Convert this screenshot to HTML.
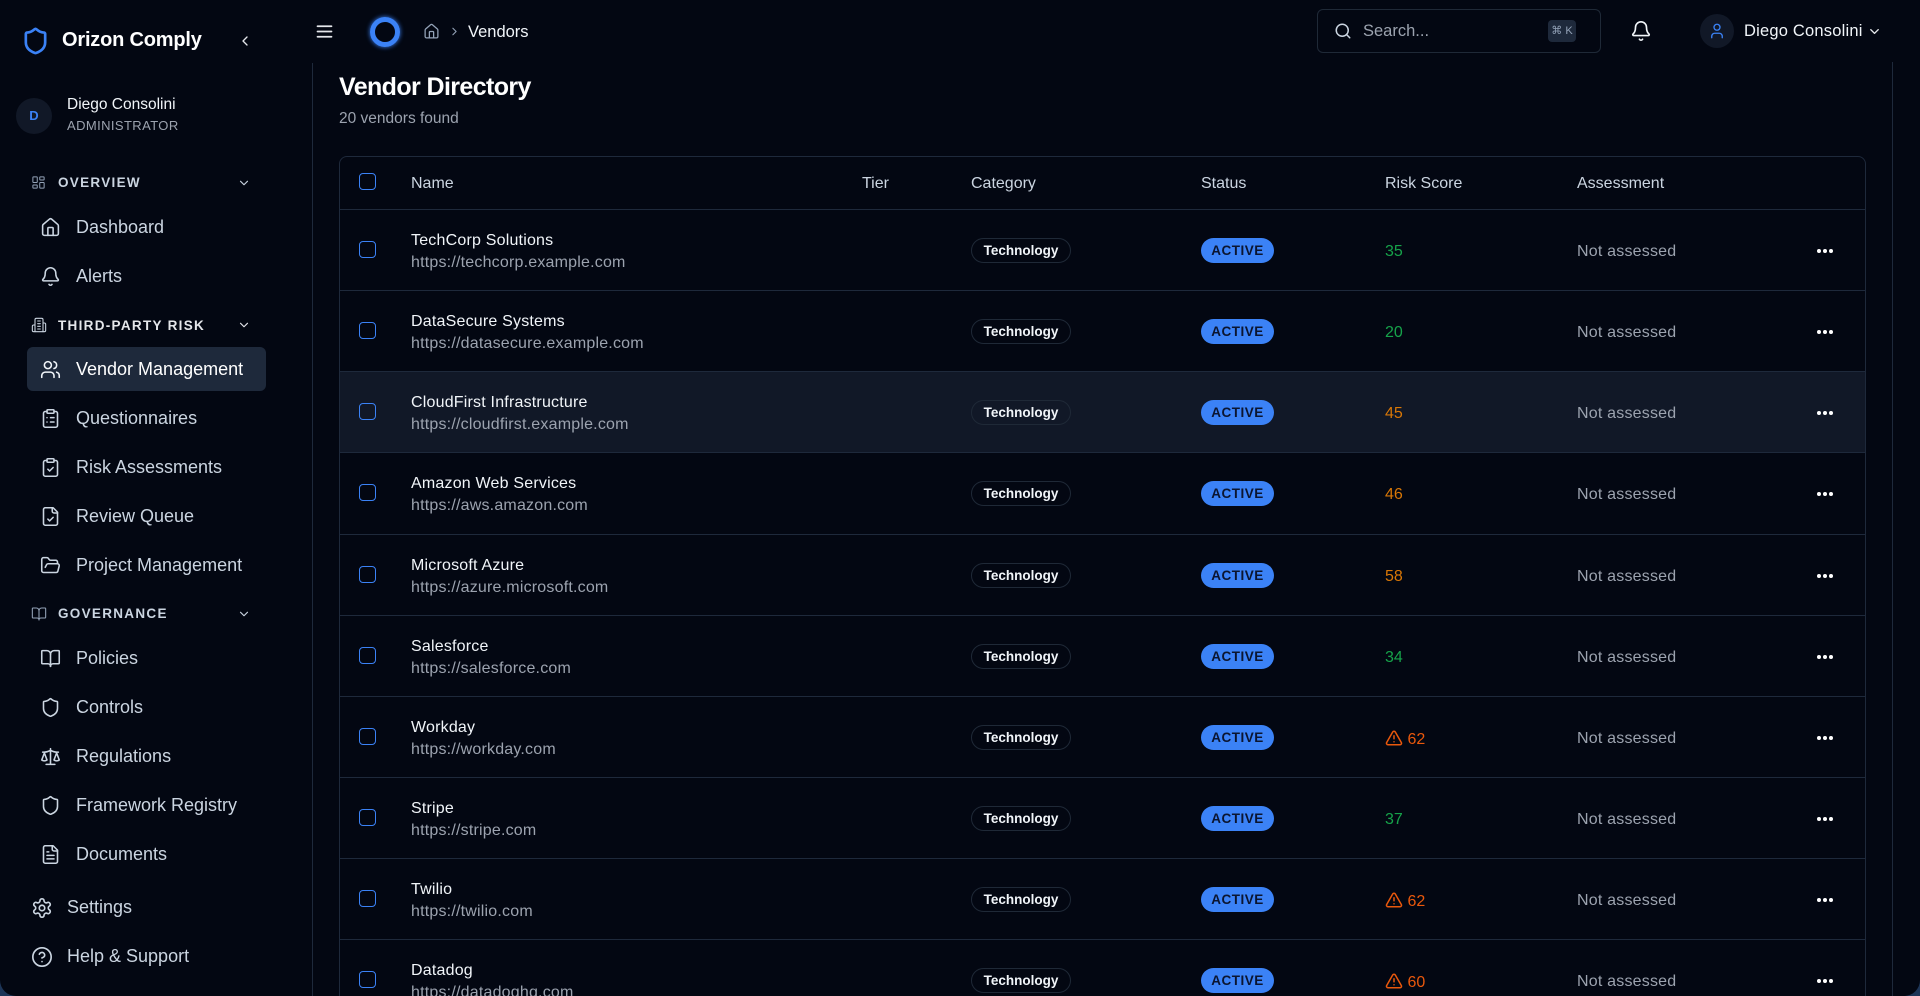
<!DOCTYPE html>
<html><head><meta charset="utf-8"><style>
*{margin:0;padding:0;box-sizing:border-box}
html,body{width:1920px;height:996px;overflow:hidden;background:#1d3557}
body{font-family:"Liberation Sans",sans-serif;color:#e5e7eb}
#app{position:absolute;left:0;top:0;width:1920px;height:996px;background:#030712;border-radius:0 0 16px 16px;overflow:hidden}
.a{position:absolute;white-space:nowrap}
svg.i{position:absolute;fill:none;stroke:currentColor;stroke-width:2;stroke-linecap:round;stroke-linejoin:round}
.nav{color:#cbd5e1;font-size:18px;margin-top:1px}
.sec{color:#cbd5e1;font-size:13.5px;font-weight:bold;letter-spacing:1.3px;margin-top:1px}
.row{position:absolute;left:340px;width:1525px;height:81px;border-top:1px solid #1e293b}
.cb{position:absolute;left:19px;width:17px;height:17px;border:1.6px solid #3b82f6;border-radius:4px}
.nm{position:absolute;left:71px;font-size:16px;letter-spacing:.2px;color:#f1f5f9}
.url{position:absolute;left:71px;font-size:16px;letter-spacing:.2px;color:#9ca3af}
.tech{position:absolute;left:631px;width:100px;height:25px;border:1.5px solid #1f2937;border-radius:13px;font-size:13.5px;font-weight:bold;color:#f1f5f9;text-align:center;line-height:23px}
.act{position:absolute;left:861px;width:73px;height:25px;background:#3b82f6;border-radius:13px;font-size:13.5px;font-weight:bold;color:#0b1530;text-align:center;line-height:26px;letter-spacing:.5px}
.rs{position:absolute;left:1045px;font-size:16px}
.asm{position:absolute;left:1237px;font-size:16px;letter-spacing:.2px;color:#9ca3af}
.dots{position:absolute;left:1477px;width:16px;height:4px}
.dots:before{content:"";position:absolute;left:0;top:0;width:4px;height:4px;border-radius:50%;background:#fff;box-shadow:6px 0 #fff,12px 0 #fff}
</style></head><body><div id="app">

<!-- Sidebar -->
<div class="a" style="left:312px;top:63px;width:1px;height:933px;background:#1e293b"></div>
<svg class="i" style="left:21px;top:25px;color:#3b82f6;stroke-width:2.2" width="29" height="32" viewBox="0 0 24 24"><path d="M20 13c0 5-3.5 7.5-7.66 8.95a1 1 0 0 1-.67-.01C7.5 20.5 4 18 4 13V6a1 1 0 0 1 1-1c2 0 4.5-1.2 6.24-2.72a1.17 1.17 0 0 1 1.52 0C14.51 3.81 17 5 19 5a1 1 0 0 1 1 1z"/></svg>
<div class="a" style="left:62px;top:29px;font-size:20px;font-weight:bold;color:#fff;letter-spacing:-.2px">Orizon Comply</div>
<svg class="i" style="left:237px;top:33px;color:#e5e7eb" width="16" height="16" viewBox="0 0 24 24"><path d="m15 18-6-6 6-6"/></svg>

<div class="a" style="left:16px;top:98px;width:36px;height:36px;border-radius:50%;background:#111827;color:#3b82f6;font-size:13px;font-weight:bold;text-align:center;line-height:36px">D</div>
<div class="a" style="left:67px;top:96px;font-size:15.5px;color:#f1f5f9">Diego Consolini</div>
<div class="a" style="left:67px;top:118px;font-size:13px;color:#9ca3af;letter-spacing:.4px">ADMINISTRATOR</div>

<svg class="i" style="left:31px;top:175px;color:#94a3b8;stroke-width:1.6" width="15" height="15" viewBox="0 0 24 24"><rect x="3" y="3" width="7" height="9" rx="1"/><rect x="14" y="3" width="7" height="5" rx="1"/><rect x="14" y="12" width="7" height="9" rx="1"/><rect x="3" y="16" width="7" height="5" rx="1"/></svg>
<div class="a sec" style="left:58px;top:174px">OVERVIEW</div>
<svg class="i" style="left:237px;top:176px;color:#cbd5e1" width="14" height="14" viewBox="0 0 24 24"><path d="m6 9 6 6 6-6"/></svg>

<svg class="i" style="left:40px;top:217px;color:#cbd5e1;stroke-width:1.8" width="21" height="21" viewBox="0 0 24 24"><path d="M15 21v-8a1 1 0 0 0-1-1h-4a1 1 0 0 0-1 1v8"/><path d="M3 10a2 2 0 0 1 .709-1.528l7-5.999a2 2 0 0 1 2.582 0l7 5.999A2 2 0 0 1 21 10v9a2 2 0 0 1-2 2H5a2 2 0 0 1-2-2z"/></svg>
<div class="a nav" style="left:76px;top:216px">Dashboard</div>
<svg class="i" style="left:40px;top:266px;color:#cbd5e1;stroke-width:1.8" width="21" height="21" viewBox="0 0 24 24"><path d="M10.268 21a2 2 0 0 0 3.464 0"/><path d="M3.262 15.326A1 1 0 0 0 4 17h16a1 1 0 0 0 .74-1.673C19.41 13.956 18 12.499 18 8A6 6 0 0 0 6 8c0 4.499-1.411 5.956-2.738 7.326"/></svg>
<div class="a nav" style="left:76px;top:265px">Alerts</div>

<svg class="i" style="left:31px;top:317px;color:#cbd5e1;stroke-width:1.6" width="16" height="16" viewBox="0 0 24 24"><path d="M6 22V4a2 2 0 0 1 2-2h8a2 2 0 0 1 2 2v18Z"/><path d="M6 12H4a2 2 0 0 0-2 2v6a2 2 0 0 0 2 2h2"/><path d="M18 9h2a2 2 0 0 1 2 2v9a2 2 0 0 1-2 2h-2"/><path d="M10 6h4M10 10h4M10 14h4M10 18h4"/></svg>
<div class="a sec" style="left:58px;top:317px;color:#e5e7eb">THIRD-PARTY RISK</div>
<svg class="i" style="left:237px;top:318px;color:#e5e7eb" width="14" height="14" viewBox="0 0 24 24"><path d="m6 9 6 6 6-6"/></svg>

<div class="a" style="left:27px;top:347px;width:239px;height:44px;background:#1e293b;border-radius:6px"></div>
<svg class="i" style="left:40px;top:359px;color:#f1f5f9;stroke-width:1.8" width="21" height="21" viewBox="0 0 24 24"><path d="M16 21v-2a4 4 0 0 0-4-4H6a4 4 0 0 0-4 4v2"/><circle cx="9" cy="7" r="4"/><path d="M22 21v-2a4 4 0 0 0-3-3.87M16 3.13a4 4 0 0 1 0 7.75"/></svg>
<div class="a nav" style="left:76px;top:358px;color:#fff">Vendor Management</div>

<svg class="i" style="left:40px;top:408px;color:#cbd5e1;stroke-width:1.8" width="21" height="21" viewBox="0 0 24 24"><rect x="8" y="2" width="8" height="4" rx="1"/><path d="M16 4h2a2 2 0 0 1 2 2v14a2 2 0 0 1-2 2H6a2 2 0 0 1-2-2V6a2 2 0 0 1 2-2h2"/><path d="M12 11h4M12 16h4M8 11h.01M8 16h.01"/></svg>
<div class="a nav" style="left:76px;top:407px">Questionnaires</div>
<svg class="i" style="left:40px;top:457px;color:#cbd5e1;stroke-width:1.8" width="21" height="21" viewBox="0 0 24 24"><rect x="8" y="2" width="8" height="4" rx="1"/><path d="M16 4h2a2 2 0 0 1 2 2v14a2 2 0 0 1-2 2H6a2 2 0 0 1-2-2V6a2 2 0 0 1 2-2h2"/><path d="m9 14 2 2 4-4"/></svg>
<div class="a nav" style="left:76px;top:456px">Risk Assessments</div>
<svg class="i" style="left:40px;top:506px;color:#cbd5e1;stroke-width:1.8" width="21" height="21" viewBox="0 0 24 24"><path d="M15 2H6a2 2 0 0 0-2 2v16a2 2 0 0 0 2 2h12a2 2 0 0 0 2-2V7Z"/><path d="M14 2v4a2 2 0 0 0 2 2h4"/><path d="m9 15 2 2 4-4"/></svg>
<div class="a nav" style="left:76px;top:505px">Review Queue</div>
<svg class="i" style="left:40px;top:555px;color:#cbd5e1;stroke-width:1.8" width="21" height="21" viewBox="0 0 24 24"><path d="m6 14 1.5-2.9A2 2 0 0 1 9.24 10H20a2 2 0 0 1 1.94 2.5l-1.54 6a2 2 0 0 1-1.95 1.5H4a2 2 0 0 1-2-2V5a2 2 0 0 1 2-2h3.9a2 2 0 0 1 1.69.9l.81 1.2a2 2 0 0 0 1.67.9H18a2 2 0 0 1 2 2v2"/></svg>
<div class="a nav" style="left:76px;top:554px">Project Management</div>

<svg class="i" style="left:31px;top:606px;color:#94a3b8;stroke-width:1.6" width="16" height="16" viewBox="0 0 24 24"><path d="M12 7v14"/><path d="M3 18a1 1 0 0 1-1-1V4a1 1 0 0 1 1-1h5a4 4 0 0 1 4 4 4 4 0 0 1 4-4h5a1 1 0 0 1 1 1v13a1 1 0 0 1-1 1h-6a3 3 0 0 0-3 3 3 3 0 0 0-3-3z"/></svg>
<div class="a sec" style="left:58px;top:605px">GOVERNANCE</div>
<svg class="i" style="left:237px;top:607px;color:#cbd5e1" width="14" height="14" viewBox="0 0 24 24"><path d="m6 9 6 6 6-6"/></svg>

<svg class="i" style="left:40px;top:648px;color:#cbd5e1;stroke-width:1.8" width="21" height="21" viewBox="0 0 24 24"><path d="M12 7v14"/><path d="M3 18a1 1 0 0 1-1-1V4a1 1 0 0 1 1-1h5a4 4 0 0 1 4 4 4 4 0 0 1 4-4h5a1 1 0 0 1 1 1v13a1 1 0 0 1-1 1h-6a3 3 0 0 0-3 3 3 3 0 0 0-3-3z"/></svg>
<div class="a nav" style="left:76px;top:647px">Policies</div>
<svg class="i" style="left:40px;top:697px;color:#cbd5e1;stroke-width:1.8" width="21" height="21" viewBox="0 0 24 24"><path d="M20 13c0 5-3.5 7.5-7.66 8.95a1 1 0 0 1-.67-.01C7.5 20.5 4 18 4 13V6a1 1 0 0 1 1-1c2 0 4.5-1.2 6.24-2.72a1.17 1.17 0 0 1 1.52 0C14.51 3.81 17 5 19 5a1 1 0 0 1 1 1z"/></svg>
<div class="a nav" style="left:76px;top:696px">Controls</div>
<svg class="i" style="left:40px;top:746px;color:#cbd5e1;stroke-width:1.8" width="21" height="21" viewBox="0 0 24 24"><path d="m16 16 3-8 3 8c-.87.65-1.920 1-3 1s-2.13-.35-3-1Z"/><path d="m2 16 3-8 3 8c-.87.65-1.92 1-3 1s-2.13-.35-3-1Z"/><path d="M7 21h10M12 3v18M3 7h2c2 0 5-1 7-2 2 1 5 2 7 2h2"/></svg>
<div class="a nav" style="left:76px;top:745px">Regulations</div>
<svg class="i" style="left:40px;top:795px;color:#cbd5e1;stroke-width:1.8" width="21" height="21" viewBox="0 0 24 24"><path d="M20 13c0 5-3.5 7.5-7.66 8.95a1 1 0 0 1-.67-.01C7.5 20.5 4 18 4 13V6a1 1 0 0 1 1-1c2 0 4.5-1.2 6.24-2.72a1.17 1.17 0 0 1 1.52 0C14.51 3.81 17 5 19 5a1 1 0 0 1 1 1z"/></svg>
<div class="a nav" style="left:76px;top:794px">Framework Registry</div>
<svg class="i" style="left:40px;top:844px;color:#cbd5e1;stroke-width:1.8" width="21" height="21" viewBox="0 0 24 24"><path d="M15 2H6a2 2 0 0 0-2 2v16a2 2 0 0 0 2 2h12a2 2 0 0 0 2-2V7Z"/><path d="M14 2v4a2 2 0 0 0 2 2h4"/><path d="M10 9H8M16 13H8M16 17H8"/></svg>
<div class="a nav" style="left:76px;top:843px">Documents</div>

<svg class="i" style="left:31px;top:897px;color:#cbd5e1;stroke-width:1.8" width="22" height="22" viewBox="0 0 24 24"><path d="M12.22 2h-.44a2 2 0 0 0-2 2v.18a2 2 0 0 1-1 1.73l-.43.25a2 2 0 0 1-2 0l-.15-.08a2 2 0 0 0-2.730.73l-.22.38a2 2 0 0 0 .73 2.73l.15.1a2 2 0 0 1 1 1.72v.51a2 2 0 0 1-1 1.74l-.15.09a2 2 0 0 0-.73 2.73l.22.38a2 2 0 0 0 2.73.73l.15-.08a2 2 0 0 1 2 0l.43.25a2 2 0 0 1 1 1.73V20a2 2 0 0 0 2 2h.44a2 2 0 0 0 2-2v-.18a2 2 0 0 1 1-1.73l.43-.25a2 2 0 0 1 2 0l.15.08a2 2 0 0 0 2.73-.73l.22-.39a2 2 0 0 0-.73-2.73l-.15-.08a2 2 0 0 1-1-1.74v-.5a2 2 0 0 1 1-1.74l.15-.09a2 2 0 0 0 .73-2.730l-.22-.38a2 2 0 0 0-2.73-.73l-.15.08a2 2 0 0 1-2 0l-.43-.25a2 2 0 0 1-1-1.73V4a2 2 0 0 0-2-2z"/><circle cx="12" cy="12" r="3"/></svg>
<div class="a nav" style="left:67px;top:896px">Settings</div>
<svg class="i" style="left:31px;top:946px;color:#cbd5e1;stroke-width:1.8" width="22" height="22" viewBox="0 0 24 24"><circle cx="12" cy="12" r="10"/><path d="M9.09 9a3 3 0 0 1 5.83 1c0 2-3 3-3 3M12 17h.01"/></svg>
<div class="a nav" style="left:67px;top:945px">Help &amp; Support</div>

<!-- Topbar -->
<svg class="i" style="left:314px;top:21px;color:#e5e7eb" width="21" height="21" viewBox="0 0 24 24"><path d="M4 6h16M4 12h16M4 18h16"/></svg>
<div class="a" style="left:370px;top:17px;width:30px;height:30px;border-radius:50%;border:5px solid #3b82f6;box-shadow:0 0 5px #3b82f6"></div>
<svg class="i" style="left:423px;top:23px;color:#94a3b8;stroke-width:1.8" width="17" height="17" viewBox="0 0 24 24"><path d="M15 21v-8a1 1 0 0 0-1-1h-4a1 1 0 0 0-1 1v8"/><path d="M3 10a2 2 0 0 1 .709-1.528l7-5.999a2 2 0 0 1 2.582 0l7 5.999A2 2 0 0 1 21 10v9a2 2 0 0 1-2 2H5a2 2 0 0 1-2-2z"/></svg>
<svg class="i" style="left:448px;top:25px;color:#94a3b8" width="13" height="13" viewBox="0 0 24 24"><path d="m9 18 6-6-6-6"/></svg>
<div class="a" style="left:468px;top:23px;font-size:16.5px;color:#f1f5f9">Vendors</div>

<div class="a" style="left:1317px;top:9px;width:284px;height:44px;border:1.5px solid #1f2937;border-radius:6px"></div>
<svg class="i" style="left:1334px;top:22px;color:#cbd5e1" width="18" height="18" viewBox="0 0 24 24"><circle cx="11" cy="11" r="8"/><path d="m21 21-4.3-4.3"/></svg>
<div class="a" style="left:1363px;top:22px;font-size:16.5px;color:#9ca3af">Search...</div>
<div class="a" style="left:1548px;top:20px;width:28px;height:22px;background:#1e293b;border-radius:4px;font-size:11px;color:#94a3b8;text-align:center;line-height:22px">⌘ K</div>
<svg class="i" style="left:1630px;top:20px;color:#f1f5f9;stroke-width:1.8" width="22" height="22" viewBox="0 0 24 24"><path d="M10.268 21a2 2 0 0 0 3.464 0"/><path d="M3.262 15.326A1 1 0 0 0 4 17h16a1 1 0 0 0 .74-1.673C19.41 13.956 18 12.499 18 8A6 6 0 0 0 6 8c0 4.499-1.411 5.956-2.738 7.326"/></svg>
<div class="a" style="left:1700px;top:14px;width:34px;height:34px;border-radius:50%;background:#111827"></div>
<svg class="i" style="left:1708px;top:22px;color:#3b82f6;stroke-width:1.8" width="18" height="18" viewBox="0 0 24 24"><path d="M19 21v-2a4 4 0 0 0-4-4H9a4 4 0 0 0-4 4v2"/><circle cx="12" cy="7" r="4"/></svg>
<div class="a" style="left:1744px;top:22px;font-size:16.5px;color:#f1f5f9;letter-spacing:.2px">Diego Consolini</div>
<svg class="i" style="left:1867px;top:24px;color:#e5e7eb" width="15" height="15" viewBox="0 0 24 24"><path d="m6 9 6 6 6-6"/></svg>

<div class="a" style="left:1892px;top:62px;width:1px;height:934px;background:#1e293b"></div>

<div class="a" style="left:339px;top:73px;font-size:25px;font-weight:bold;color:#fff;letter-spacing:-.6px">Vendor Directory</div>
<div class="a" style="left:339px;top:110px;font-size:15.5px;color:#9ca3af">20 vendors found</div>

<div class="a" style="left:339px;top:156px;width:1527px;height:860px;border:1.5px solid #1e293b;border-radius:8px"></div>
<div class="row" style="top:156px;height:53px;border-top:none">
  <div class="cb" style="top:17px"></div>
  <div class="a" style="left:71px;top:19px;font-size:16px;color:#cbd5e1">Name</div>
  <div class="a" style="left:522px;top:19px;font-size:16px;color:#cbd5e1">Tier</div>
  <div class="a" style="left:631px;top:19px;font-size:16px;color:#cbd5e1">Category</div>
  <div class="a" style="left:861px;top:19px;font-size:16px;color:#cbd5e1">Status</div>
  <div class="a" style="left:1045px;top:19px;font-size:16px;color:#cbd5e1">Risk Score</div>
  <div class="a" style="left:1237px;top:19px;font-size:16px;color:#cbd5e1">Assessment</div>
</div>

<div class="row" style="top:209px"><div class="cb" style="top:31px"></div><div class="nm" style="top:22px">TechCorp Solutions</div><div class="url" style="top:44px">https://techcorp.example.com</div><div class="tech" style="top:28px">Technology</div><div class="act" style="top:28px">ACTIVE</div><div class="rs" style="top:33px;color:#16a34a">35</div><div class="asm" style="top:33px">Not assessed</div><div class="dots" style="top:39px"></div></div>
<div class="row" style="top:290px"><div class="cb" style="top:31px"></div><div class="nm" style="top:22px">DataSecure Systems</div><div class="url" style="top:44px">https://datasecure.example.com</div><div class="tech" style="top:28px">Technology</div><div class="act" style="top:28px">ACTIVE</div><div class="rs" style="top:33px;color:#16a34a">20</div><div class="asm" style="top:33px">Not assessed</div><div class="dots" style="top:39px"></div></div>
<div class="row" style="top:371px;background:#111827"><div class="cb" style="top:31px"></div><div class="nm" style="top:22px">CloudFirst Infrastructure</div><div class="url" style="top:44px">https://cloudfirst.example.com</div><div class="tech" style="top:28px">Technology</div><div class="act" style="top:28px">ACTIVE</div><div class="rs" style="top:33px;color:#d97706">45</div><div class="asm" style="top:33px">Not assessed</div><div class="dots" style="top:39px"></div></div>
<div class="row" style="top:452px"><div class="cb" style="top:31px"></div><div class="nm" style="top:22px">Amazon Web Services</div><div class="url" style="top:44px">https://aws.amazon.com</div><div class="tech" style="top:28px">Technology</div><div class="act" style="top:28px">ACTIVE</div><div class="rs" style="top:33px;color:#d97706">46</div><div class="asm" style="top:33px">Not assessed</div><div class="dots" style="top:39px"></div></div>
<div class="row" style="top:534px"><div class="cb" style="top:31px"></div><div class="nm" style="top:22px">Microsoft Azure</div><div class="url" style="top:44px">https://azure.microsoft.com</div><div class="tech" style="top:28px">Technology</div><div class="act" style="top:28px">ACTIVE</div><div class="rs" style="top:33px;color:#d97706">58</div><div class="asm" style="top:33px">Not assessed</div><div class="dots" style="top:39px"></div></div>
<div class="row" style="top:615px"><div class="cb" style="top:31px"></div><div class="nm" style="top:22px">Salesforce</div><div class="url" style="top:44px">https://salesforce.com</div><div class="tech" style="top:28px">Technology</div><div class="act" style="top:28px">ACTIVE</div><div class="rs" style="top:33px;color:#16a34a">34</div><div class="asm" style="top:33px">Not assessed</div><div class="dots" style="top:39px"></div></div>
<div class="row" style="top:696px"><div class="cb" style="top:31px"></div><div class="nm" style="top:22px">Workday</div><div class="url" style="top:44px">https://workday.com</div><div class="tech" style="top:28px">Technology</div><div class="act" style="top:28px">ACTIVE</div><div class="rs" style="top:32px;color:#ea580c"><svg style="vertical-align:-3px;fill:none;stroke:#ea580c;stroke-width:2;stroke-linecap:round;stroke-linejoin:round" width="18" height="18" viewBox="0 0 24 24"><path d="m21.73 18-8-14a2 2 0 0 0-3.48 0l-8 14A2 2 0 0 0 4 21h16a2 2 0 0 0 1.73-3"/><path d="M12 9v4M12 17h.01"/></svg> 62</div><div class="asm" style="top:33px">Not assessed</div><div class="dots" style="top:39px"></div></div>
<div class="row" style="top:777px"><div class="cb" style="top:31px"></div><div class="nm" style="top:22px">Stripe</div><div class="url" style="top:44px">https://stripe.com</div><div class="tech" style="top:28px">Technology</div><div class="act" style="top:28px">ACTIVE</div><div class="rs" style="top:33px;color:#16a34a">37</div><div class="asm" style="top:33px">Not assessed</div><div class="dots" style="top:39px"></div></div>
<div class="row" style="top:858px"><div class="cb" style="top:31px"></div><div class="nm" style="top:22px">Twilio</div><div class="url" style="top:44px">https://twilio.com</div><div class="tech" style="top:28px">Technology</div><div class="act" style="top:28px">ACTIVE</div><div class="rs" style="top:32px;color:#ea580c"><svg style="vertical-align:-3px;fill:none;stroke:#ea580c;stroke-width:2;stroke-linecap:round;stroke-linejoin:round" width="18" height="18" viewBox="0 0 24 24"><path d="m21.73 18-8-14a2 2 0 0 0-3.48 0l-8 14A2 2 0 0 0 4 21h16a2 2 0 0 0 1.73-3"/><path d="M12 9v4M12 17h.01"/></svg> 62</div><div class="asm" style="top:33px">Not assessed</div><div class="dots" style="top:39px"></div></div>
<div class="row" style="top:939px"><div class="cb" style="top:31px"></div><div class="nm" style="top:22px">Datadog</div><div class="url" style="top:44px">https://datadoghq.com</div><div class="tech" style="top:28px">Technology</div><div class="act" style="top:28px">ACTIVE</div><div class="rs" style="top:32px;color:#ea580c"><svg style="vertical-align:-3px;fill:none;stroke:#ea580c;stroke-width:2;stroke-linecap:round;stroke-linejoin:round" width="18" height="18" viewBox="0 0 24 24"><path d="m21.73 18-8-14a2 2 0 0 0-3.48 0l-8 14A2 2 0 0 0 4 21h16a2 2 0 0 0 1.73-3"/><path d="M12 9v4M12 17h.01"/></svg> 60</div><div class="asm" style="top:33px">Not assessed</div><div class="dots" style="top:39px"></div></div>

</div></body></html>
